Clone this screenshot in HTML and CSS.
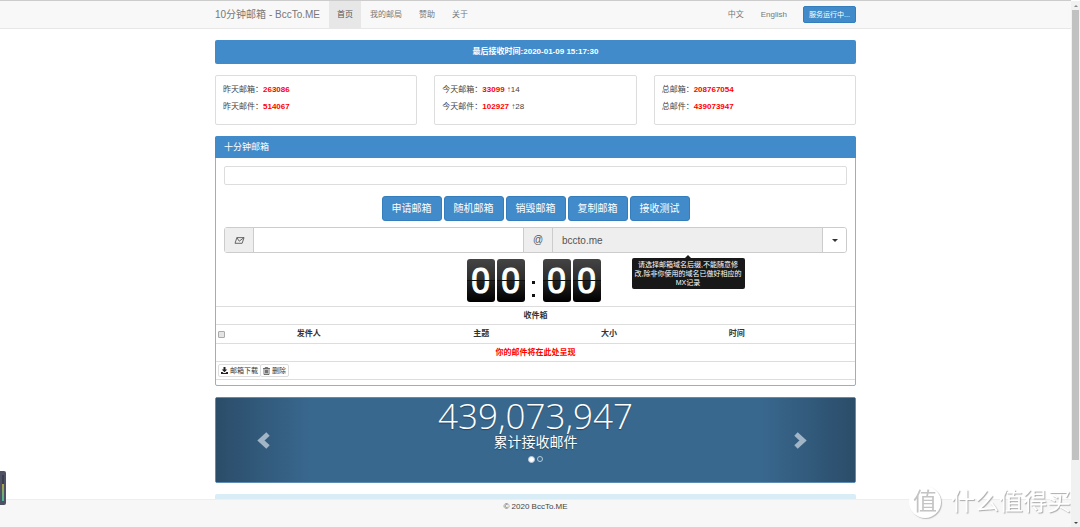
FILE: index.html
```html
<!DOCTYPE html>
<html lang="zh-CN">
<head>
<meta charset="utf-8">
<title>10分钟邮箱 - BccTo.ME</title>
<link rel="stylesheet" href="styles.css">
</head>
<body>
<nav class="navbar">
  <div class="container nav-inner">
    <a class="brand" href="#">10分钟邮箱 - BccTo.ME</a>
    <a class="nav-link active" href="#">首页</a>
    <a class="nav-link" href="#">我的邮局</a>
    <a class="nav-link" href="#">赞助</a>
    <a class="nav-link" href="#">关于</a>
    <a class="nav-link push" href="#">中文</a>
    <a class="nav-link" href="#">English</a>
    <button class="status" type="button">服务运行中...</button>
  </div>
</nav>

<main class="container content">
  <div class="notice">最后接收时间:2020-01-09 15:17:30</div>

  <section class="stats">
    <div class="stat"><p>昨天邮箱：<b>263086</b></p><p>昨天邮件：<b>514067</b></p></div>
    <div class="stat"><p>今天邮箱：<b>33099</b> ↑14</p><p>今天邮件：<b>102927</b> ↑28</p></div>
    <div class="stat"><p>总邮箱：<b>208767054</b></p><p>总邮件：<b>439073947</b></p></div>
  </section>

  <section class="panel">
    <h1 class="panel-title">十分钟邮箱</h1>
    <div class="panel-body">
      <input class="message" type="text" aria-label="消息" readonly>
      <div class="actions">
        <button type="button">申请邮箱</button>
        <button type="button">随机邮箱</button>
        <button type="button">销毁邮箱</button>
        <button type="button">复制邮箱</button>
        <button type="button">接收测试</button>
      </div>
      <div class="address">
        <label class="addon" for="mailbox" aria-label="邮箱">
          <svg width="11" height="7" viewBox="0 0 12 8" fill="none" stroke="#555" stroke-width="1"><path d="M3 .7H11.2L9 7.2H.9Z"/><path d="M3 .8 5.700 4.800 11 .8"/></svg>
        </label>
        <input id="mailbox" class="mailbox" type="text">
        <label class="addon at" for="domain">@</label>
        <div class="domain-wrap">
          <input id="domain" class="domain" type="text" value="bccto.me" readonly>
          <div class="tooltip" role="tooltip">请选择邮箱域名后缀,不能随意修<br>改,除非你使用的域名已做好相应的<br>MX记录</div>
        </div>
        <button class="toggle" type="button" aria-label="选择域名"><span class="caret"></span></button>
      </div>
      <div class="clock">
        <span class="flip">0</span><span class="flip">0</span>
        <span class="colon"><i></i><i></i></span>
        <span class="flip">0</span><span class="flip">0</span>
      </div>
    </div>
    <table class="inbox">
      <colgroup><col class="c-check"><col class="c-from"><col class="c-subject"><col class="c-size"><col class="c-time"><col></colgroup>
      <thead>
        <tr><th colspan="6">收件箱</th></tr>
        <tr class="heads"><th><input type="checkbox" aria-label="全选"></th><th>发件人</th><th>主题</th><th>大小</th><th>时间</th><th></th></tr>
      </thead>
      <tbody>
        <tr><td class="empty" colspan="6">你的邮件将在此处呈现</td></tr>
        <tr><td class="tools" colspan="6"><div class="tool-group">
          <button type="button"><svg width="7" height="7" viewBox="0 0 14 14" fill="#222"><path d="M5 0h4v5h3.500L7 10.500 1.500 5H5zM0 10h3l2 2h4l2-2h3v4H0z"/></svg>邮箱下载</button><button type="button"><svg width="7" height="8" viewBox="0 0 14 16" fill="none" stroke="#444" stroke-width="1.500"><path d="M0 3h14M4.500 3V1h5v2M2 3.500V15h10V3.500M5 5v8M7 5v8M9 5v8"/></svg>删除</button>
        </div></td></tr>
      </tbody>
    </table>
  </section>

  <section class="carousel">
    <button class="arrow prev" type="button" aria-label="上一个"><svg width="13" height="17" viewBox="0 0 13 17" fill="none" stroke="currentColor" stroke-width="5"><path d="M11 2 4 8.500 11 15"/></svg></button>
    <div class="slide">
      <div class="count">439,073,947</div>
      <div class="caption">累计接收邮件</div>
      <div class="dots"><i class="on"></i><i></i></div>
    </div>
    <button class="arrow next" type="button" aria-label="下一个"><svg width="13" height="17" viewBox="0 0 13 17" fill="none" stroke="currentColor" stroke-width="5"><path d="M2 2 9 8.500 2 15"/></svg></button>
  </section>

  <div class="info"></div>
</main>

<footer class="footer">© 2020 BccTo.ME</footer>
<div class="meter"><i></i></div>
<div class="watermark"><span class="seal">值</span><span>什么值得买</span></div>
<div class="scrollbar"><span class="up"></span><span class="thumb"></span><span class="down"></span></div>
</body>
</html>
```
FILE: styles.css
```css
* { box-sizing: border-box; }
body {
  margin: 0;
  padding-right: 9px;
  height: 100vh;
  overflow: hidden;
  background: #fff;
  color: #444;
  font: 8px/12px "Liberation Sans", "Noto Sans CJK SC", sans-serif;
}
a { text-decoration: none; }
p { margin: 0; }
button, input { font: inherit; color: inherit; margin: 0; }
button { display: flex; align-items: center; justify-content: center; padding: 0; white-space: nowrap; }
.container { width: 100%; max-width: 641px; margin: 0 auto; }

.navbar { background: #f8f8f8; border-top: 1px solid #ccc; border-bottom: 1px solid #e7e7e7; }
.nav-inner { display: flex; align-items: center; gap: 1px; height: 27px; }
.brand { font-size: 10px; color: #777; margin-right: 8px; }
.nav-link { color: #777; padding: 0 8px; line-height: 27px; }
.nav-link.active { background: #e7e7e7; color: #555; }
.push { margin-left: auto; }
.status { margin-left: 7px; height: 17px; width: 53px; border: 1px solid #357ebd; border-radius: 2px; background: #428bca; color: #fff; font-size: 7px; }

.content { display: flex; flex-direction: column; gap: 11px; padding-top: 11px; }
.notice { height: 24px; line-height: 24px; border-radius: 2px; background: #428bca; color: #fff; font-weight: bold; text-align: center; }
.stats { display: grid; grid-template-columns: repeat(3, 1fr); gap: 17px; }
.stat { height: 50px; padding: 5px 7px; border: 1px solid #ddd; border-radius: 2px; line-height: 17px; }
.stat b { color: #f00; }

.panel { border: 1px solid #86b4dc; border-radius: 2px; height: 250px; }
.panel-title { margin: -1px -1px 0; padding: 0 9px; font-size: 9px; font-weight: normal; line-height: 22px; background: #428bca; color: #fff; border-radius: 2px 2px 0 0; }
.panel-body { padding: 8px 8px 4px; }
.message { display: block; width: 100%; height: 19px; border: 1px solid #ddd; border-radius: 2px; }
.actions { display: flex; justify-content: center; gap: 2px; margin: 11px 0 6px; }
.actions button { width: 60px; height: 25px; background: #428bca; border: 1px solid #357ebd; border-radius: 3px; color: #fff; font-size: 10px; }

.address { display: flex; height: 26px; border: 1px solid #ccc; border-radius: 3px; font-size: 10px; color: #555; }
.addon { flex: none; width: 29px; display: flex; align-items: center; justify-content: center; background: #eee; border-right: 1px solid #ccc; }
.at { border-left: 1px solid #ccc; width: 30px; }
.mailbox { flex: 1; min-width: 0; border: 0; padding: 0; text-indent: 8px; }
.domain-wrap { flex: 1; min-width: 0; position: relative; }
.domain { display: block; width: 100%; height: 100%; border: 0; padding: 0 9px; background: #eee; }
.toggle { flex: none; width: 24px; border: 0; border-left: 1px solid #ccc; background: #fff; border-radius: 0 3px 3px 0; }
.caret { border: 3px solid transparent; border-top-color: #333; border-bottom: 0; }
.tooltip { position: absolute; z-index: 2; top: 30px; left: 50%; width: 113px; margin-left: -56px; padding: 2px 3px; border-radius: 2px; background: #181818; color: #fff; font-size: 7px; line-height: 9px; text-align: center; white-space: nowrap; }
.tooltip::before { content: ""; position: absolute; left: 50%; top: -3px; margin-left: -3px; border: 3px solid transparent; border-top: 0; border-bottom-color: #181818; }

.clock { display: flex; justify-content: center; gap: 2px; margin: 6px 4px 0 0; }
.flip { position: relative; width: 28px; height: 43px; border-radius: 3px; background: linear-gradient(#444, #2c2c2c 49%, #222 51%, #000); color: #fff; font: 400 35px/46px Roboto, sans-serif; text-align: center; -webkit-text-stroke: 1px #fff; }
.flip::after { content: ""; position: absolute; left: 0; right: 0; top: 21px; height: 1px; background: #111; }
.colon { display: flex; flex-direction: column; gap: 10px; width: 14px; padding: 22px 0 0 5px; }
.colon i { width: 3px; height: 3px; background: #111; }

.inbox { width: 100%; table-layout: fixed; border-collapse: collapse; color: #333; }
.c-check { width: 2%; }
.c-from { width: 25%; }
.c-subject { width: 29%; }
.c-size { width: 11%; }
.c-time { width: 29%; }
.inbox th, .inbox td { height: 18px; padding: 0; border-top: 1px solid #ddd; text-align: center; line-height: 12px; }
.inbox .heads th { height: 19px; }
.inbox .heads input { display: block; width: 7px; height: 7px; margin: 0 0 0 2px; appearance: none; border: 1px solid #aaa; border-radius: 1px; background: #e4e4e4; }
.inbox tbody tr:last-child { border-bottom: 1px solid #ddd; }
.inbox .empty { color: #f00; font-weight: bold; }
.tool-group { display: flex; padding-left: 2px; }
.tool-group button { height: 13px; padding: 0 2px; gap: 2px; border: 1px solid #ddd; border-radius: 2px; background: #fff; font-size: 7px; }
.tool-group button + button { margin-left: -1px; }

.carousel { display: flex; justify-content: space-between; height: 86px; border: 1px solid #5d8db5; border-radius: 2px; background: #39688f; color: #fff; }
.arrow { width: 15%; border: 0; color: #a1b5c6; }
.prev { background: linear-gradient(90deg, #2b4d69, #39688f); }
.next { background: linear-gradient(270deg, #2b4d69, #39688f); padding-right: 14px; }
.slide { text-align: center; text-shadow: 0 1px 1px #24445f; }
.count { font: 300 35px/36px "Open Sans", sans-serif; }
.caption { font-size: 14px; line-height: 16px; }
.dots { display: flex; justify-content: center; gap: 2px; padding-top: 6px; }
.dots i { width: 6px; height: 6px; border: 1px solid #b5c9da; border-radius: 50%; }
.dots .on { width: 7px; height: 7px; background: #fff; }
.info { height: 30px; border-radius: 2px; background: #d9edf7; }

.footer { position: fixed; left: 0; right: 9px; bottom: 0; height: 28px; border-top: 1px solid #eee; background: #f7f7f7; text-align: center; line-height: 13px; }
.meter { position: fixed; left: 0; bottom: 22px; width: 6px; height: 34px; padding: 4px 2px; border-radius: 0 2px 2px 0; background: #4d5163; }
.meter i { display: block; height: 26px; background: linear-gradient(#3a3d4c 35%, #b0a04b 36%, #48b79a); }
.watermark { position: fixed; right: 9px; bottom: 9px; display: flex; align-items: center; gap: 10px; color: #fff; font-size: 24px; line-height: 32px; text-shadow: 1px 1px 1px #aaa; }
.seal { width: 32px; height: 32px; border-radius: 50%; background: #fff; color: #c4c4c4; text-align: center; text-shadow: none; box-shadow: 1px 1px 1px #bbb; line-height: 31px; }
.scrollbar { position: fixed; top: 1px; right: 0; bottom: 0; width: 9px; display: grid; grid-template-rows: 9px 450fr 58fr 9px; padding: 0 1px; background: #f1f1f1; justify-items: center; align-items: center; }
.thumb { width: 100%; height: 100%; background: #c1c1c1; }
.up { border: 2px solid transparent; border-top: 0; border-bottom-color: #888; }
.down { grid-row: 4; border: 2px solid transparent; border-bottom: 0; border-top-color: #444; }
```
